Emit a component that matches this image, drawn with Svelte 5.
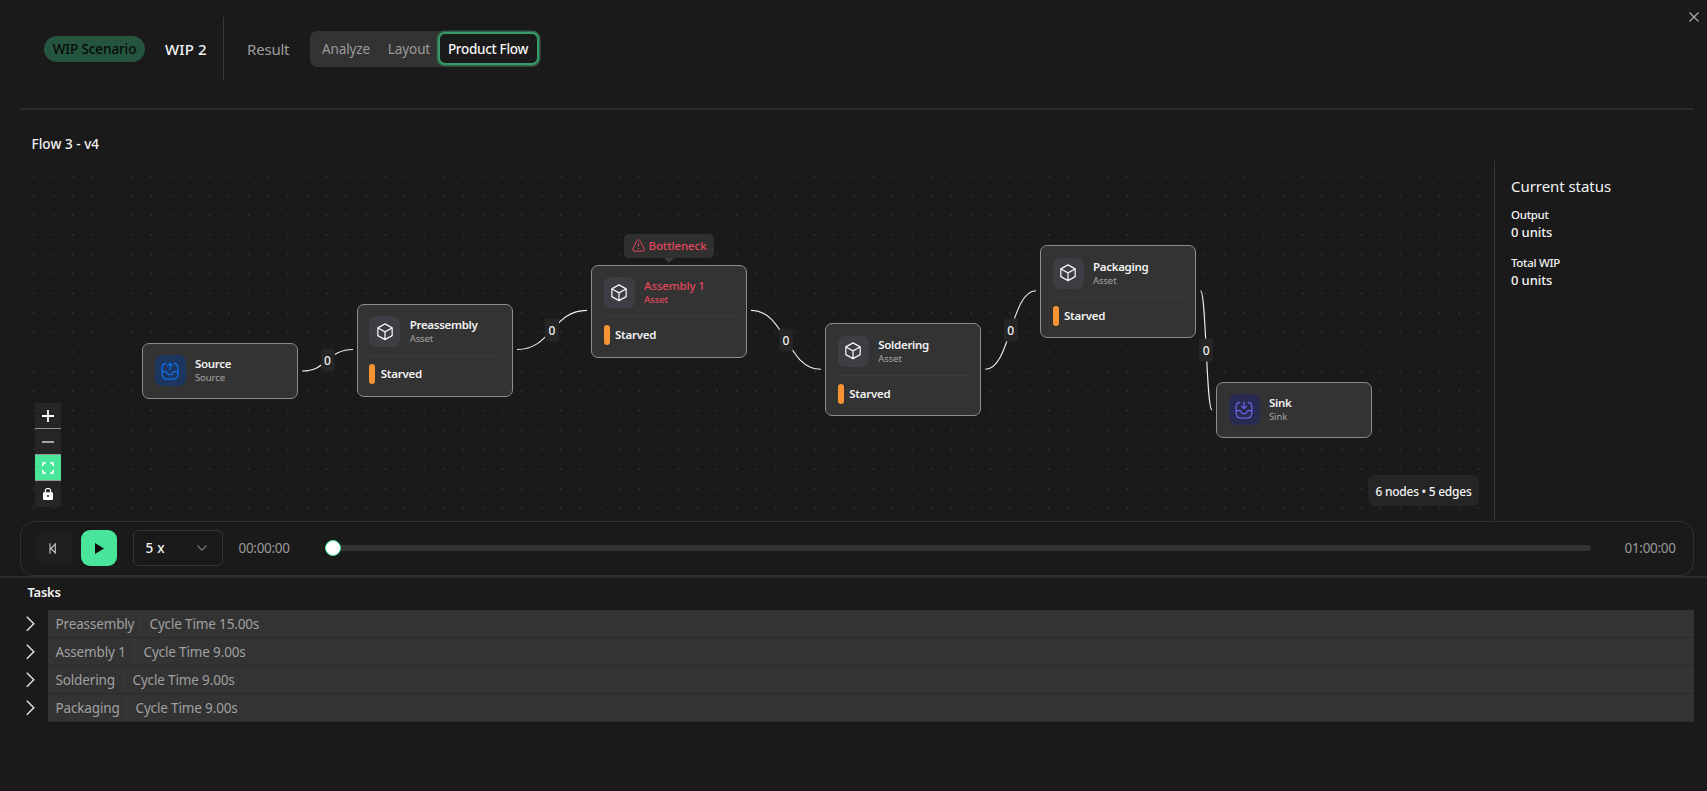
<script>
  const nodes = [
    { name: 'Source', type: 'Source', kind: 'source', x: 142, y: 342.6 },
    { name: 'Preassembly', type: 'Asset', kind: 'asset', x: 356.7, y: 303.6 },
    { name: 'Assembly 1', type: 'Asset', kind: 'asset', x: 591, y: 264.5, alert: true },
    { name: 'Soldering', type: 'Asset', kind: 'asset', x: 825.3, y: 323 },
    { name: 'Packaging', type: 'Asset', kind: 'asset', x: 1040, y: 245 },
    { name: 'Sink', type: 'Sink', kind: 'sink', x: 1216, y: 381.6 }
  ];
  const edges = [
    [302, 371, 353, 349.5],
    [517, 349.5, 587, 310.4],
    [751, 310.4, 821, 369.2],
    [985.3, 369.2, 1036, 290.8],
    [1200.5, 290.8, 1212, 410]
  ];
  const curve = ([a, b, c, d]) => `M${a},${b} C${(a + c) / 2},${b} ${(a + c) / 2},${d} ${c},${d}`;
  // canvas origin inside the page
  const ox = 20;
  const oy = 161;
  const tasks = [
    { name: 'Preassembly', time: '15.00s', w: 85 },
    { name: 'Assembly 1', time: '9.00s', w: 79 },
    { name: 'Soldering', time: '9.00s', w: 68 },
    { name: 'Packaging', time: '9.00s', w: 71 }
  ];
</script>

<div class="page">
  <header>
    <span class="pill"><span class="t">WIP Scenario</span></span>
    <span class="name">WIP 2</span>
    <span class="vline"></span>
    <span class="result">Result</span>
    <nav>
      <button class="tab analyze">Analyze</button>
      <button class="tab layout">Layout</button>
      <button class="tab active">Product Flow</button>
    </nav>
    <svg class="close" width="10" height="10" viewBox="0 0 10 10"><path d="M.5 .5L9.5 9.5M9.5 .5L.5 9.5" /></svg>
  </header>

  <h2>Flow 3 - v4</h2>

  <main>
    <div class="canvas">
      <svg class="wires" width="1474" height="360" viewBox="20 161 1474 360">
        <defs>
          <pattern id="dots" x="24.2" y="166.5" width="19.52" height="19.52" patternUnits="userSpaceOnUse">
            <circle cx="9.76" cy="9.76" r=".8" fill="#424242" />
          </pattern>
        </defs>
        <rect x="32" y="161" width="1450" height="352" fill="url(#dots)" />
        {#each edges as e}
          <path d={curve(e)} />
        {/each}
      </svg>
      {#each edges as e}
        <span class="count" style="left:{(e[0] + e[2]) / 2 - ox}px;top:{(e[1] + e[3]) / 2 - oy}px">0</span>
      {/each}
      {#each nodes as n}
        <div class="node {n.kind}" class:alert={n.alert} style="left:{n.x - ox}px;top:{n.y - oy}px">
          <div class="top">
            <div class="icon">
              {#if n.kind === 'asset'}
                <svg width="20" height="20" viewBox="0 0 24 24"><path d="M12 2.3L20.6 7V16.4L12 21.2L3.4 16.4V7ZM3.6 7.2L12 11.8L20.4 7.2M12 11.8V21" /></svg>
              {:else}
                <svg width="20" height="20" viewBox="0 0 24 24">
                  <path d="M7 2.9C3.6 3.2 2.5 5 2.5 9V15C2.5 20 4.3 21.8 9 21.8H15C19.7 21.8 21.5 20 21.5 15V9C21.5 5 20.4 3.2 17 2.9M2.5 12.6H6.3C7.2 12.6 7.9 13.1 8.3 13.9L8.9 15C9.4 16 9.9 16.2 10.8 16.2H13.2C14.1 16.2 14.6 16 15.1 15L15.7 13.9C16.1 13.1 16.8 12.6 17.7 12.6H21.5" />
                  {#if n.kind === 'source'}
                    <path d="M12 10.5V3M9 5.7L12 2.8L15 5.7" />
                  {:else}
                    <path d="M12 2.5V10M9 7.3L12 10.2L15 7.3" />
                  {/if}
                </svg>
              {/if}
            </div>
            <div class="label">
              <strong>{n.name}</strong>
              <small>{n.type}</small>
            </div>
          </div>
          {#if n.kind === 'asset'}
            <div class="state"><i></i><b>Starved</b></div>
          {/if}
          {#if n.alert}
            <div class="tip">
              <svg width="13" height="13" viewBox="0 0 13 13"><path d="M5.2 1.5Q6.5 -.3 7.8 1.5L12 9.5Q12.8 12 10.6 12.2H2.4Q.2 12 1 9.5ZM6.5 4V7.6M6.5 9V10.1" /></svg>
              <span>Bottleneck</span>
            </div>
          {/if}
        </div>
      {/each}

      <div class="controls">
        <button><svg width="12" height="12" viewBox="0 0 12 12"><path d="M6 0V12M0 6H12" stroke="#fff" stroke-width="1.8" /></svg></button>
        <button class="dim"><svg width="12" height="12" viewBox="0 0 12 12"><path d="M0 6H12" stroke="#b4b4b4" stroke-width="1.8" /></svg></button>
        <button class="fit"><svg width="12" height="12" viewBox="0 0 12 12"><path d="M.8 4V2Q.8 .8 2 .8H4M8 .8H10Q11.2 .8 11.2 2V4M11.2 8V10Q11.2 11.2 10 11.2H8M4 11.2H2Q.8 11.2 .8 10V8" stroke="#fff" stroke-width="1.6" fill="none" /></svg></button>
        <button><svg width="10" height="12" viewBox="0 0 10 12"><path d="M2.3 5V3A2.7 2.5 0 0 1 7.7 3V5" stroke="#fff" stroke-width="1.2" fill="none" /><rect y="4.2" width="10" height="7.8" rx="1.2" fill="#fff" /><circle cx="5" cy="8.1" r="1" fill="#252525" /></svg></button>
      </div>
      <div class="summary">6 nodes • 5 edges</div>
    </div>
    <aside>
      <h3>Current status</h3>
      <p class="k">Output</p>
      <p class="v">0 units</p>
      <p class="k second">Total WIP</p>
      <p class="v">0 units</p>
    </aside>
  </main>

  <section class="player">
    <button class="prev"><svg width="8" height="11" viewBox="0 0 8 11"><path d="M1 .3V10.7M6.3 1L2 5.5L6.3 10V1Z" /></svg></button>
    <button class="play"><svg width="9" height="11" viewBox="0 0 9 11"><path d="M0 0L9 5.5L0 11Z" /></svg></button>
    <div class="speed"><span>5 x</span><svg width="10" height="6" viewBox="0 0 10 6"><path d="M.5 .5L5 5.2L9.5 .5" /></svg></div>
    <time class="now">00:00:00</time>
    <div class="track"><i></i></div>
    <time>01:00:00</time>
  </section>

  <section class="tasks">
    <h4>Tasks</h4>
    {#each tasks as t}
      <div class="row">
        <svg width="9" height="16" viewBox="0 0 9 16"><path d="M.8 .8L7.8 7.7L.8 14.8" /></svg>
        <div class="bar">
          <span class="task" style="width:{t.w}px">{t.name}</span>
          <span class="cycle">Cycle Time {t.time}</span>
        </div>
      </div>
    {/each}
  </section>
</div>

<style>
  :global(body) { background: #1a1a1a; }
  * { box-sizing: border-box; margin: 0; }
  .page { height: 791px; overflow: hidden; background: #1a1a1a; color: #f2f2f2; font: 13.5px "Noto Sans", "Open Sans", sans-serif; letter-spacing: -.2px; white-space: nowrap; }
  button { font: inherit; letter-spacing: inherit; color: inherit; border: 0; padding: 0; background: none; display: flex; align-items: center; justify-content: center; }
  svg { flex: none; fill: none; }

  header { position: relative; height: 110px; margin: 0 13px 0 20px; padding: 17px 0 0 24px; display: flex; align-items: flex-start; border-bottom: 2px solid #292929; }
  .pill { width: 101px; height: 26px; margin-top: 18.5px; border-radius: 13px; background: #26553f; color: #050a07; font-size: 13.5px; font-weight: 500; letter-spacing: -.1px; display: flex; align-items: center; justify-content: center; }
  .name { width: 78px; padding-left: 20px; line-height: 64px; font-size: 15px; font-weight: 500; letter-spacing: .1px; }
  .vline { width: 1px; height: 63px; background: #383838; }
  .result { width: 86px; padding-left: 23px; line-height: 64px; font-size: 15px; color: #9d9d9d; }
  nav { display: flex; width: 230px; height: 36px; margin-top: 13.5px; border-radius: 7px; background: #333; align-items: center; }
  .tab { height: 32px; color: #9a9a9a; }
  .analyze { width: 72px; letter-spacing: -.1px; }
  .layout { width: 54px; letter-spacing: -.1px; }
  .active { width: 101px; height: 33px; margin-left: 1.5px; border: 2px solid #38996b; border-radius: 7px; background: #1a1a1a; color: #f5f5f5; font-weight: 500; letter-spacing: -.3px; box-shadow: 0 0 0 1.5px #34614b; }
  .close { position: absolute; right: -5px; top: 12px; stroke: #aaa; stroke-width: 1.2; }

  h2 { height: 51px; padding: 0 0 0 31.5px; line-height: 68px; font-size: 13.5px; font-weight: 500; letter-spacing: .05px; }
  main { display: flex; height: 360px; padding-left: 20px; }
  .canvas { position: relative; width: 1474px; }
  .wires { display: block; }
  .wires path { stroke: #f0f0f0; stroke-width: 1.1; }
  .count { position: absolute; width: 14px; height: 23px; transform: translate(-50%, -50%); border-radius: 3px; background: #252525; text-align: center; line-height: 23px; font-size: 12px; font-weight: 500; letter-spacing: 0; }

  .node { position: absolute; width: 156px; padding: 11.5px; border: 1px solid #8d8d8d; border-radius: 7px; background: #333; }
  .top { display: flex; gap: 9.5px; height: 31.5px; }
  .icon { width: 31px; height: 31px; border-radius: 7px; background: #3d3d43; display: flex; align-items: center; justify-content: center; }
  .icon svg { stroke: #f5f5f5; stroke-width: 1.5; stroke-linejoin: round; stroke-linecap: round; }
  .source .icon { background: #1d365f; }
  .source .icon svg { stroke: #0a6fea; }
  .sink .icon { background: #292a52; }
  .sink .icon svg { stroke: #6366e0; }
  .label strong { display: block; line-height: 17px; font-size: 11.5px; font-weight: 600; letter-spacing: -.3px; }
  .label small { display: block; line-height: 12px; font-size: 9.5px; color: #a5a5a5; letter-spacing: -.1px; }
  .state { display: flex; align-items: center; gap: 5.5px; margin-top: 7.5px; padding-top: 8px; border-top: 1px solid #3a3a3a; }
  .state i { width: 6px; height: 20px; border-radius: 3px; background: #f79431; }
  .state b { line-height: 20px; font-size: 11.5px; font-weight: 600; letter-spacing: -.25px; }
  .alert .label strong, .alert .label small { color: #e0475a; font-weight: 500; }
  .alert .label strong { letter-spacing: -.15px; }
  .tip { position: absolute; left: 32px; top: -32px; width: 90px; height: 24px; border-radius: 5px; background: #303030; color: #e0475a; display: flex; align-items: center; justify-content: center; gap: 4px; font-size: 11.5px; font-weight: 500; letter-spacing: -.1px; }
  .tip svg { stroke: #e0475a; stroke-width: 1; }
  .tip::after { content: ''; position: absolute; left: 40px; top: 24px; border: 5px solid transparent; border-top-color: #3a3a3a; border-bottom: 0; }

  .controls { position: absolute; left: 15px; top: 242px; width: 26px; }
  .controls button { width: 26px; height: 26px; background: #252525; border-bottom: 1px solid #939393; }
  .controls .fit { background: #48e59b; }
  .controls button:last-child { border: 0; }
  .summary { position: absolute; right: 15px; bottom: 15px; width: 111px; height: 31px; border-radius: 7px; background: #252525; text-align: center; line-height: 33px; font-size: 12px; font-weight: 500; letter-spacing: -.25px; }

  aside { flex: 1; border-left: 1px solid #383838; padding: 14px 0 0 16px; }
  h3 { font-size: 15px; font-weight: 400; line-height: 22px; letter-spacing: -.05px; }
  .k { margin-top: 10px; font-size: 11.5px; font-weight: 500; line-height: 16px; letter-spacing: -.3px; }
  .v { font-size: 13px; font-weight: 500; line-height: 18px; letter-spacing: -.1px; }
  .second { margin-top: 14px; }

  .player { display: flex; align-items: center; height: 54.5px; margin: 0 13px 0 20px; padding-left: 15.5px; border: 1px solid #303030; border-radius: 14px; }
  .prev, .play { width: 36px; height: 36px; border-radius: 9px; background: #1e1e1e; }
  .prev svg { margin-right: 4px; stroke: #c8c8c8; stroke-width: 1.1; }
  .play { margin-left: 8px; background: #48e59b; }
  .play svg { fill: #0c0c0c; margin-left: 2px; }
  .speed { display: flex; align-items: center; justify-content: space-between; width: 90px; height: 36px; margin-left: 16px; padding: 0 15px 0 12px; border: 1px solid #353535; border-radius: 5px; font-weight: 500; word-spacing: 1px; }
  .speed svg { stroke: #777; stroke-width: 1.2; }
  time { width: 52px; color: #999; letter-spacing: -.3px; }
  .now { margin-left: 16px; }
  .track { width: 1266px; height: 6px; margin: 0 34px; border-radius: 3px; background: #333; }
  .track i { display: block; width: 16px; height: 16px; margin-top: -5px; border-radius: 50%; border: 1px solid #48e59b; background: #fff; }

  .tasks { border-top: 2px solid #2b2b2b; }
  h4 { height: 32px; padding-left: 27.5px; line-height: 29px; font-size: 13px; font-weight: 600; letter-spacing: -.25px; }
  .row { display: flex; align-items: center; height: 28px; padding: 0 13px 0 26px; }
  .row > svg { margin-right: 13px; stroke: #e5e5e5; stroke-width: 1.4; }
  .bar { flex: 1; height: 28px; padding: 3px 0 0 7.5px; border-bottom: 1px solid #2a2a2a; background: #333; display: flex; line-height: 23px; color: #a0a0a0; letter-spacing: -.15px; }
  .task { height: 21px; border-right: 1px solid #3c3c3c; }
  .cycle { padding-left: 9px; }
</style>
